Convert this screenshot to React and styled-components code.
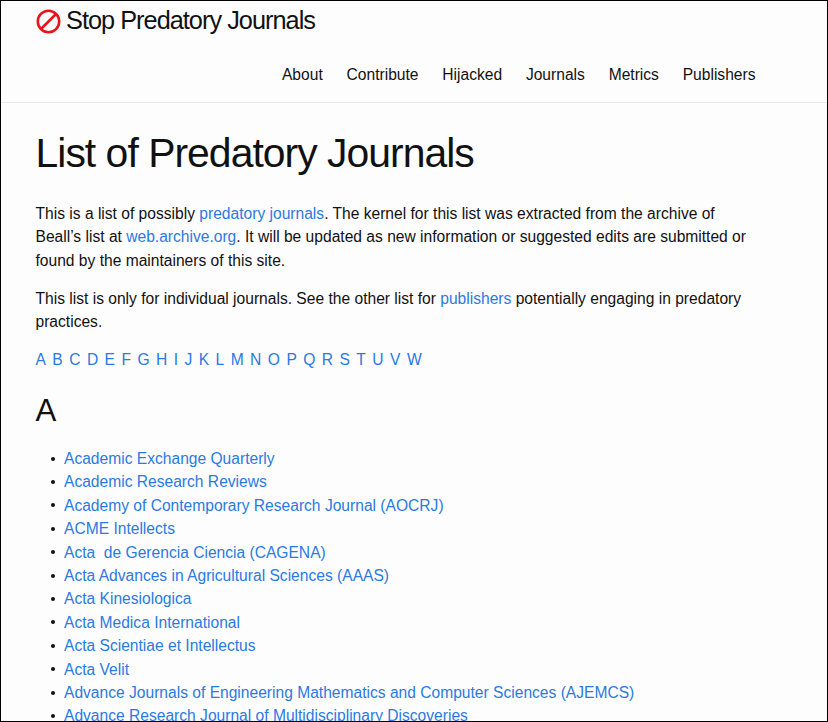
import React from 'react'
import styled, { createGlobalStyle } from 'styled-components'

const Global = createGlobalStyle`
  html, body {
    margin: 0;
    padding: 0;
    height: 722px;
    overflow: hidden;
    background: #fefdfe;
  }
  body {
    font-family: "Liberation Sans", Arial, sans-serif;
    font-size: 15.6px;
    line-height: 23.4px;
    color: #111;
  }
`

const Page = styled.div`
  height: 722px;
  box-sizing: border-box;
  overflow: hidden;
  border: 1px solid #000;
`

const Header = styled.header`
  height: 102px;
  box-sizing: border-box;
  border-bottom: 1px solid #e8e8e8;
  padding: 0 35px;
  display: flex;
  flex-direction: column;
  justify-content: space-between;
`

const Brand = styled.a`
  display: flex;
  align-items: center;
  gap: 5px;
  height: 40px;
  font-size: 25.3px;
  letter-spacing: -0.975px;
  color: #111;
`

const Nav = styled.nav`
  display: flex;
  justify-content: flex-end;
  gap: 23.8px;
  padding: 0 36.5px 16px 0;
`

const NavLink = styled.a`
  color: #111;
`

const Main = styled.main`
  padding: 30px 35px 0 34.5px;
`

const Title = styled.h1`
  margin: 0 0 28px;
  font-size: 40.9px;
  font-weight: 400;
  line-height: 41px;
  letter-spacing: -0.975px;
`

const Para = styled.p`
  margin: 0 0 14.6px;
  max-width: 715px;
`

const Link = styled.a`
  color: #2a7ae2;
`

const Letters = styled.p`
  margin: 0 0 15.6px;
  display: flex;
  gap: 6.45px;
`

const Section = styled.h2`
  margin: 0 0 11.7px;
  font-size: 31.2px;
  font-weight: 400;
  line-height: 48px;
`

const List = styled.ul`
  margin: 0;
  padding: 0 0 0 28.5px;
  list-style: none;
`

const Item = styled.li`
  display: flex;
  align-items: center;
  white-space: pre;

  &::before {
    content: "";
    width: 4px;
    height: 4px;
    margin: 0 9px 0 -13px;
    border-radius: 50%;
    background: #111;
  }
`

const alphabet = 'A B C D E F G H I J K L M N O P Q R S T U V W'.split(' ')

const journals = [
  'Academic Exchange Quarterly',
  'Academic Research Reviews',
  'Academy of Contemporary Research Journal (AOCRJ)',
  'ACME Intellects',
  'Acta  de Gerencia Ciencia (CAGENA)',
  'Acta Advances in Agricultural Sciences (AAAS)',
  'Acta Kinesiologica',
  'Acta Medica International',
  'Acta Scientiae et Intellectus',
  'Acta Velit',
  'Advance Journals of Engineering Mathematics and Computer Sciences (AJEMCS)',
  'Advance Research Journal of Multidisciplinary Discoveries',
]

function StopIcon() {
  return (
    <svg width="25" height="25" viewBox="0 0 25 25" fill="none" stroke="#e8141c" strokeWidth="2.6">
      <circle cx="12.5" cy="12.5" r="10.7" />
      <path d="M5 20 L20 5" />
    </svg>
  )
}

export default function App() {
  return (
    <>
      <Global />
      <Page>
        <Header>
          <Brand>
            <StopIcon />
            Stop Predatory Journals
          </Brand>
          <Nav>
            <NavLink>About</NavLink>
            <NavLink>Contribute</NavLink>
            <NavLink>Hijacked</NavLink>
            <NavLink>Journals</NavLink>
            <NavLink>Metrics</NavLink>
            <NavLink>Publishers</NavLink>
          </Nav>
        </Header>
        <Main>
          <Title>List of Predatory Journals</Title>
          <Para>
            This is a list of possibly <Link>predatory journals</Link>. The kernel for this list was extracted from the archive of Beall’s list at <Link>web.archive.org</Link>. It will be updated as new information or suggested edits are submitted or found by the maintainers of this site.
          </Para>
          <Para>
            This list is only for individual journals. See the other list for <Link>publishers</Link> potentially engaging in predatory practices.
          </Para>
          <Letters>
            {alphabet.map((l) => <Link key={l}>{l}</Link>)}
          </Letters>
          <Section>A</Section>
          <List>
            {journals.map((j) => <Item key={j}><Link>{j}</Link></Item>)}
          </List>
        </Main>
      </Page>
    </>
  )
}
